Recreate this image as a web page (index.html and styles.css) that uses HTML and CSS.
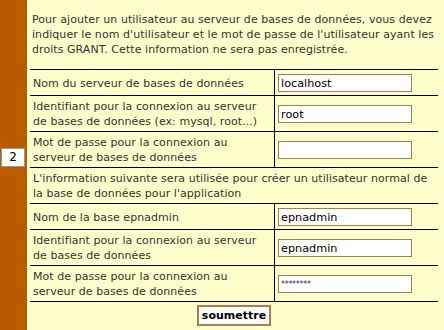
FILE: index.html
```html
<!DOCTYPE html>
<html>
<head>
  <title>Installation EPN-Admin</title>
  <link rel="stylesheet" href="styles.css">
</head>
<body>
  <div id="page">
    <div id="sidebar">
      <div class="step">2</div>
    </div>

    <div id="content">
      <p class="intro">Pour ajouter un utilisateur au serveur de bases de données, vous devez indiquer le nom d'utilisateur et le mot de passe de l'utilisateur ayant les droits GRANT. Cette information ne sera pas enregistrée.</p>

      <form onsubmit="event.preventDefault();">
        <table id="dbform">
          <tr>
            <td class="label">Nom du serveur de bases de données</td>
            <td class="field"><input type="text" value="localhost"></td>
          </tr>
          <tr>
            <td class="label">Identifiant pour la connexion au serveur de bases de données (ex: mysql, root...)</td>
            <td class="field"><input type="text" value="root"></td>
          </tr>
          <tr>
            <td class="label">Mot de passe pour la connexion au serveur de bases de données</td>
            <td class="field"><input type="text" value=""></td>
          </tr>
          <tr>
            <td class="info" colspan="2">L'information suivante sera utilisée pour créer un utilisateur normal de la base de données pour l'application</td>
          </tr>
          <tr>
            <td class="label">Nom de la base epnadmin</td>
            <td class="field"><input type="text" value="epnadmin"></td>
          </tr>
          <tr>
            <td class="label">Identifiant pour la connexion au serveur de bases de données</td>
            <td class="field"><input type="text" value="epnadmin"></td>
          </tr>
          <tr>
            <td class="label">Mot de passe pour la connexion au serveur de bases de données</td>
            <td class="field"><input type="text" class="pw" value="********"></td>
          </tr>
          <tr>
            <td class="submit" colspan="2"><button type="submit">soumettre</button></td>
          </tr>
        </table>
      </form>
    </div>
  </div>
</body>
</html>
```

FILE: styles.css
```css
body {
  font-family: "DejaVu Sans", Verdana, sans-serif;
  font-size: 11px;
  letter-spacing: 0.06px;
  line-height: 15px;
  color: #333;
  margin: 0;
  padding: 0;
  background-color: #ffffcc;
}

#page {
  display: flex;
  min-height: 330px;
}

#sidebar {
  width: 27px;
  flex-shrink: 0;
  background-color: #b95c00;
}

.step {
  width: 22px;
  height: 17px;
  margin: 148px 0 0 1px;
  background-color: #fff;
  border: 1px solid #999;
  color: #000;
  text-align: center;
  line-height: 17px;
  font-size: 12px;
}

#content {
  width: 408px;
  margin-left: 3px;
}

.intro {
  margin: 12px -3px 12px 2px;
}

#dbform {
  width: 100%;
  border-collapse: collapse;
}

#dbform td {
  padding: 3px 3px 2px;
  border-top: 1px solid #000;
  vertical-align: middle;
}

#dbform td.label {
  width: 235px;
  padding-right: 6px;
  border-right: 1px solid #000;
}

#dbform input {
  width: 134px;
  height: 18px;
  box-sizing: border-box;
  margin: 1px 0;
  padding: 0 2px;
  border: 1px solid #a97d50;
  background-color: #fff;
  font-family: "DejaVu Sans", Verdana, sans-serif;
  font-size: 11.25px;
  color: #000;
}

#dbform input.pw {
  font-size: 8px;
  letter-spacing: -0.3px;
  color: #333;
}

#dbform td.submit {
  text-align: center;
  padding-top: 3px;
}

#dbform button {
  padding: 2px 3px;
  background-color: #fff;
  border: 2px solid #a97d50;
  font-family: "DejaVu Sans", Verdana, sans-serif;
  font-size: 11px;
  font-weight: bold;
  color: #000;
}
```
